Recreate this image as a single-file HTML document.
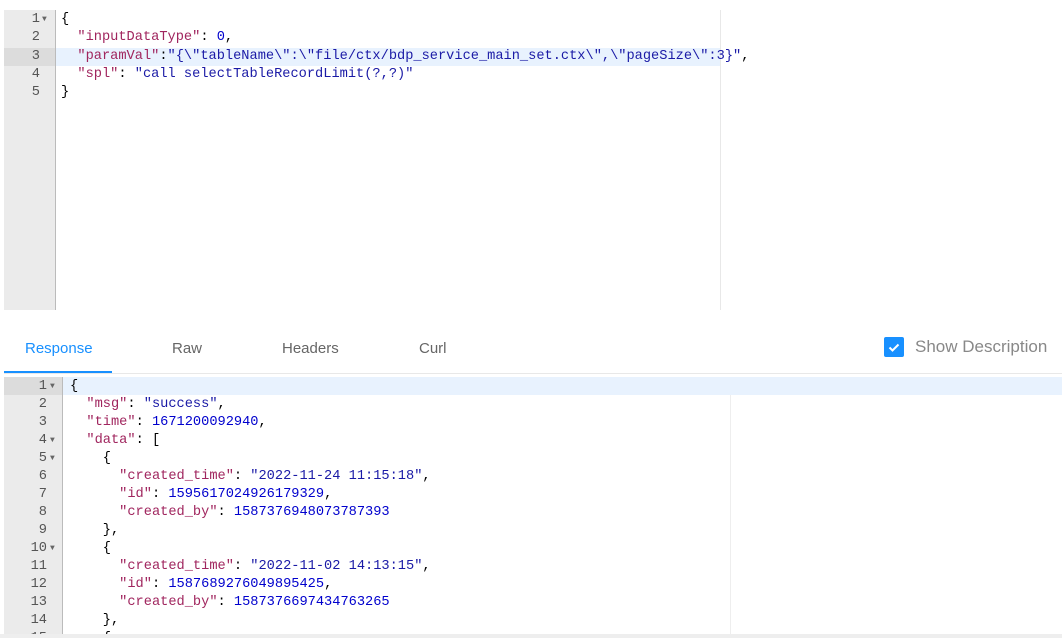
<!DOCTYPE html>
<html><head><style>
html,body{margin:0;width:1062px;height:638px;background:#fff;overflow:hidden;position:relative;font-family:"Liberation Sans",sans-serif}
.ed{position:absolute;font-family:"Liberation Mono",monospace;font-size:13.67px;white-space:pre;overflow:hidden}
.g{position:absolute;background:#ebebeb;border-right:1px solid #bbb}
.ln{position:absolute;height:18px;line-height:18px;text-align:right;color:#555}
.l{position:absolute;height:18px;line-height:18px;color:#000}
.k{color:#a0255e}.s{color:#1a1aa6}.n{color:#0000cd}
.f{font-size:8px;color:#666}
</style></head><body>
<div class="ed" style="left:0;top:0;width:1062px;height:312px">
 <div class="g" style="left:4px;top:10px;width:51px;height:300px"></div>
 <div style="position:absolute;left:4px;top:48px;width:51px;height:18px;background:#dcdcdc"></div>
 <div style="position:absolute;left:56px;top:48px;width:664px;height:18px;background:#e8f2fe"></div>
 <div style="position:absolute;left:720px;top:10px;width:1px;height:300px;background:#e8e8e8"></div>
 <div class="ln" style="left:4px;top:11px;width:36px">1</div><div class="ln f" style="left:42px;top:11px">▼</div>
 <div class="ln" style="left:4px;top:29px;width:36px">2</div>
 <div class="ln" style="left:4px;top:48px;width:36px">3</div>
 <div class="ln" style="left:4px;top:66px;width:36px">4</div>
 <div class="ln" style="left:4px;top:84px;width:36px">5</div>
 <div class="l" style="left:61px;top:11px">{</div>
 <div class="l" style="left:61px;top:29px">  <span class="k">"inputDataType"</span>: <span class="n">0</span>,</div>
 <div class="l" style="left:61px;top:48px">  <span class="k">"paramVal"</span>:<span class="s">"{\"tableName\":\"file/ctx/bdp_service_main_set.ctx\",\"pageSize\":3}"</span>,</div>
 <div class="l" style="left:61px;top:66px">  <span class="k">"spl"</span>: <span class="s">"call selectTableRecordLimit(?,?)"</span></div>
 <div class="l" style="left:61px;top:84px">}</div>
</div>
<div style="position:absolute;left:25px;top:340px;font-size:15px;color:#1890ff">Response</div>
<div style="position:absolute;left:172px;top:340px;font-size:15px;color:#666">Raw</div>
<div style="position:absolute;left:282px;top:340px;font-size:15px;color:#666">Headers</div>
<div style="position:absolute;left:419px;top:340px;font-size:15px;color:#666">Curl</div>
<div style="position:absolute;left:4px;top:371px;width:108px;height:3px;background:#1890ff"></div>
<div style="position:absolute;left:4px;top:373px;width:1058px;height:1px;background:#e8e8e8"></div>
<div style="position:absolute;left:884px;top:337px;width:20px;height:20px;background:#1890ff;border-radius:2px"><svg width="20" height="20"><path d="M5.5 10.5l3 3 6-6" stroke="#fff" stroke-width="2" fill="none"/></svg></div>
<div style="position:absolute;left:915px;top:337px;font-size:17px;color:#888">Show Description</div>
<div class="ed" style="left:0;top:377px;width:1062px;height:261px">
 <div class="g" style="left:4px;top:0;width:58px;height:257px"></div>
 <div style="position:absolute;left:4px;top:0;width:58px;height:18px;background:#dcdcdc"></div>
 <div style="position:absolute;left:63px;top:0;width:999px;height:18px;background:#e8f2fe"></div>
 <div style="position:absolute;left:730px;top:18px;width:1px;height:240px;background:#eee"></div>
 <div class="ln" style="left:4px;top:1px;width:43px">1</div><div class="ln f" style="left:50px;top:1px">▼</div>
 <div class="ln" style="left:4px;top:19px;width:43px">2</div>
 <div class="ln" style="left:4px;top:37px;width:43px">3</div>
 <div class="ln" style="left:4px;top:55px;width:43px">4</div><div class="ln f" style="left:50px;top:55px">▼</div>
 <div class="ln" style="left:4px;top:73px;width:43px">5</div><div class="ln f" style="left:50px;top:73px">▼</div>
 <div class="ln" style="left:4px;top:91px;width:43px">6</div>
 <div class="ln" style="left:4px;top:109px;width:43px">7</div>
 <div class="ln" style="left:4px;top:127px;width:43px">8</div>
 <div class="ln" style="left:4px;top:145px;width:43px">9</div>
 <div class="ln" style="left:4px;top:163px;width:43px">10</div><div class="ln f" style="left:50px;top:163px">▼</div>
 <div class="ln" style="left:4px;top:181px;width:43px">11</div>
 <div class="ln" style="left:4px;top:199px;width:43px">12</div>
 <div class="ln" style="left:4px;top:217px;width:43px">13</div>
 <div class="ln" style="left:4px;top:235px;width:43px">14</div>
 <div class="ln" style="left:4px;top:253px;width:43px">15</div>
 <div class="l" style="left:70px;top:1px">{</div>
 <div class="l" style="left:70px;top:19px">  <span class="k">"msg"</span>: <span class="s">"success"</span>,</div>
 <div class="l" style="left:70px;top:37px">  <span class="k">"time"</span>: <span class="n">1671200092940</span>,</div>
 <div class="l" style="left:70px;top:55px">  <span class="k">"data"</span>: [</div>
 <div class="l" style="left:70px;top:73px">    {</div>
 <div class="l" style="left:70px;top:91px">      <span class="k">"created_time"</span>: <span class="s">"2022-11-24 11:15:18"</span>,</div>
 <div class="l" style="left:70px;top:109px">      <span class="k">"id"</span>: <span class="n">1595617024926179329</span>,</div>
 <div class="l" style="left:70px;top:127px">      <span class="k">"created_by"</span>: <span class="n">1587376948073787393</span></div>
 <div class="l" style="left:70px;top:145px">    },</div>
 <div class="l" style="left:70px;top:163px">    {</div>
 <div class="l" style="left:70px;top:181px">      <span class="k">"created_time"</span>: <span class="s">"2022-11-02 14:13:15"</span>,</div>
 <div class="l" style="left:70px;top:199px">      <span class="k">"id"</span>: <span class="n">1587689276049895425</span>,</div>
 <div class="l" style="left:70px;top:217px">      <span class="k">"created_by"</span>: <span class="n">1587376697434763265</span></div>
 <div class="l" style="left:70px;top:235px">    },</div>
 <div class="l" style="left:70px;top:253px">    {</div>
 <div style="position:absolute;left:0;top:257px;width:1062px;height:4px;background:#eee"></div>
</div>
</body></html>
